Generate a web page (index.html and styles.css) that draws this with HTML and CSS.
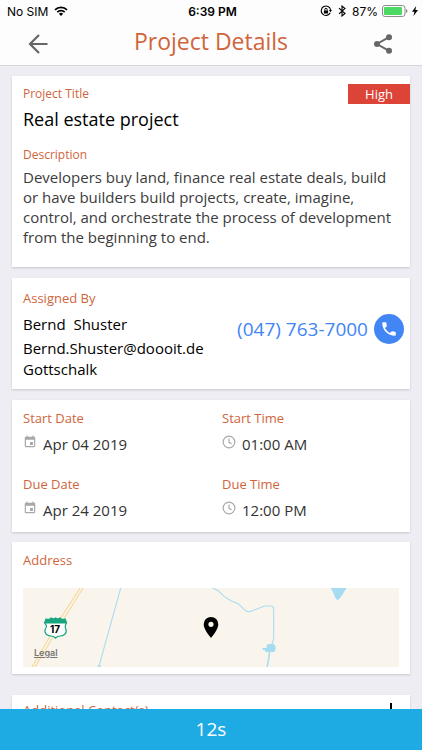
FILE: index.html
```html
<!DOCTYPE html>
<html lang="en">
<head>
<meta charset="utf-8">
<meta name="viewport" content="width=device-width, initial-scale=1">
<title>Project Details</title>
<link rel="stylesheet" href="styles.css">
</head>
<body>
<svg class="defs" aria-hidden="true">
  <symbol id="calendar" viewBox="0 0 24 24"><path d="M17 12h-5v5h5v-5zM16 1v2H8V1H6v2H5c-1.110 0-1.990.9-1.990 2L3 19a2 2 0 0 0 2 2h14c1.100 0 2-.9 2-2V5c0-1.100-.9-2-2-2h-1V1h-2zm3 18H5V8h14v11z"/></symbol>
  <symbol id="clock" viewBox="0 0 24 24"><circle cx="12" cy="12" r="10" fill="none" stroke="currentColor" stroke-width="2"/><path d="M12 6v6.500l4.500 2.500" fill="none" stroke="currentColor" stroke-width="2"/></symbol>
</svg>

<div class="status">
  <div class="status-left">
    <span>No SIM</span>
    <svg class="wifi" viewBox="0 0 14 10"><path d="M7 10 4.900 7.800a3 3 0 0 1 4.200 0z"/><path d="M3.300 6.200a5.200 5.200 0 0 1 7.400 0M1 3.800a8.500 8.500 0 0 1 12 0" fill="none" stroke="currentColor" stroke-width="1.800"/></svg>
  </div>
  <span class="status-time">6:39 PM</span>
  <div class="status-right">
    <svg class="lock" viewBox="0 0 12 12"><path d="M10.200 7.800A4.700 4.700 0 1 1 10.600 5" fill="none" stroke="currentColor" stroke-width="1.100"/><path d="M9 5h3l-1.500 2.200zM3.900 5.500h4.200v3H3.900z"/><path d="M4.800 5.600V4.500a1.200 1.200 0 0 1 2.400 0v1.100" fill="none" stroke="currentColor"/></svg>
    <svg class="bluetooth" viewBox="0 0 8 12"><path d="m1 3.200 6 5.300L4 11V1l3 2.500-6 5.300" fill="none" stroke="currentColor" stroke-width="1.100"/></svg>
    <span>87%</span>
    <svg class="battery" viewBox="0 0 26 12"><rect x=".5" y=".5" width="22.500" height="11" rx="2.500" fill="none" stroke="#8d8d8d"/><rect x="2" y="2" width="18" height="8" rx="1" fill="#4cd964"/><path d="M24 4q1.500.5 1.500 2T24 8z" fill="#8d8d8d"/></svg>
    <svg class="bolt" viewBox="0 0 6 10"><path d="M4.200 0 0 5.700h2.400L1.500 10 6 4H3.400z"/></svg>
  </div>
</div>

<header class="topbar">
  <button class="icon-button" type="button" aria-label="Back">
    <svg class="back" viewBox="0 0 20 20"><path d="M19.500 10H2M11 1 2 10l9 9" fill="none" stroke="currentColor" stroke-width="2.200"/></svg>
  </button>
  <h1>Project Details</h1>
  <button class="icon-button" type="button" aria-label="Share">
    <svg class="share" viewBox="0 0 18 20"><path d="M15 3.200 3 10l12 6.800" fill="none" stroke="currentColor" stroke-width="1.900"/><circle cx="15" cy="3.200" r="3"/><circle cx="3" cy="10" r="3"/><circle cx="15" cy="16.800" r="3"/></svg>
  </button>
</header>

<main>
  <section class="card summary">
    <span class="priority">High</span>
    <h2 class="small-label">Project Title</h2>
    <p class="project-name">Real estate project</p>
    <h2 class="small-label">Description</h2>
    <p class="description">Developers buy land, finance real estate deals, build or have builders build projects, create, imagine, control, and orchestrate the process of development from the beginning to end.</p>
  </section>

  <section class="card assigned">
    <div class="person">
      <h2 class="label">Assigned By</h2>
      <p class="person-name">Bernd&nbsp; Shuster</p>
      <p>Bernd.Shuster@doooit.de</p>
      <p>Gottschalk</p>
    </div>
    <a class="phone" href="tel:0477637000">
      <span>(047) 763-7000</span>
      <span class="call"><svg viewBox="0 0 24 24"><path d="M6.620 10.790c1.440 2.830 3.760 5.140 6.590 6.590l2.200-2.200c.27-.27.67-.36 1.020-.24 1.120.37 2.330.57 3.570.57.55 0 1 .45 1 1V20c0 .55-.45 1-1 1-9.390 0-17-7.610-17-17 0-.55.45-1 1-1h3.500c.55 0 1 .45 1 1 0 1.250.2 2.450.57 3.570.11.35.03.74-.25 1.020l-2.200 2.200z"/></svg></span>
    </a>
  </section>

  <section class="card schedule">
    <div class="slot"><h2 class="label">Start Date</h2><p class="value"><svg class="value-icon"><use href="#calendar"/></svg>Apr 04 2019</p></div>
    <div class="slot"><h2 class="label">Start Time</h2><p class="value"><svg class="value-icon"><use href="#clock"/></svg>01:00 AM</p></div>
    <div class="slot"><h2 class="label">Due Date</h2><p class="value"><svg class="value-icon"><use href="#calendar"/></svg>Apr 24 2019</p></div>
    <div class="slot"><h2 class="label">Due Time</h2><p class="value"><svg class="value-icon"><use href="#clock"/></svg>12:00 PM</p></div>
  </section>

  <section class="card address">
    <h2 class="label">Address</h2>
    <div class="map">
      <svg class="map-art" viewBox="0 0 375 79" preserveAspectRatio="xMidYMid slice">
        <g fill="none" stroke="#f7d797" stroke-width="1"><path d="M57 0 37 31 9 79M60 0 40 32 12 79"/></g>
        <g fill="none" stroke="#a9dcf0" stroke-width="1.100"><path d="M97.500 0 75.500 79M74.500 79l1.500-2 2 1.500"/><path d="M189 0l6 3 6 6 7 4 7 3 6 6q3 3 7 1l13-5h6q3 0 3 3v30l-2 6"/><path d="m246 62-1 9-1.500 8" stroke-width="1.600"/></g>
        <path d="M243 58q0-2 3-2h4q2 1 2 4 0 4-3 4h-6q-2 0-2-2h-2v-2h4zM307 0h16q-2 2-4 6-3 5-5 6-2 0-4-6-2-4-3-6z" fill="#a5dcf2"/>
        <path d="M23 31q4 1 5-1 2 2 4.500 0 2.500 2 4.500 0 1 2 5 1l1.500 4q-2.500 3-.5 7c1 4-3 6-6 6-2 0-3.500 1-4.500 2-1-1-2.500-2-4.500-2-3 0-7-2-6-6 2-4 2-4-.5-7z" fill="#fff" stroke="#17a57f" stroke-width="1.200"/>
        <path d="M23 31q4 1 5-1 2 2 4.500 0 2.500 2 4.500 0 1 2 5 1l1.500 4.500h-22z" fill="#17a57f"/>
        <text class="route" x="32" y="45" text-anchor="middle">17</text>
        <path d="M187.500 29a7.300 7.300 0 0 0-7.300 7.300c0 5.500 7.300 13.700 7.300 13.700s7.300-8.200 7.300-13.700a7.300 7.300 0 0 0-7.300-7.300zm0 9.900a2.600 2.600 0 1 1 0-5.200 2.600 2.600 0 0 1 0 5.200z"/>
      </svg>
      <a class="legal" href="#legal">Legal</a>
    </div>
  </section>

  <section class="card contacts">
    <h2 class="label">Additional Contact(s)</h2>
    <button class="add" type="button" aria-label="Add contact"><svg viewBox="0 0 16 16"><path d="M8 1v14M1 8h14" fill="none" stroke="currentColor" stroke-width="2"/></svg></button>
  </section>
</main>

<footer class="timer">12s</footer>
</body>
</html>
```
FILE: styles.css
```css
* { box-sizing: border-box; }

body {
  margin: 0;
  height: 100vh;
  display: flex;
  flex-direction: column;
  overflow: hidden;
  background: #eeedf4;
  color: #000;
  font-family: "Open Sans", "Noto Sans", sans-serif;
  font-size: 15px;
}

h1, h2, p { margin: 0; font-weight: 400; }
svg { display: block; fill: currentColor; }
button { border: 0; padding: 0; background: none; color: inherit; }
.defs { position: absolute; width: 0; height: 0; }

.status {
  flex: none;
  display: grid;
  grid-template-columns: 1fr auto 1fr;
  align-items: center;
  height: 22px;
  padding: 0 4px 0 7px;
  background: #fdfdfd;
  font-family: Inter, "Liberation Sans", sans-serif;
  font-size: 12px;
}
.status-left, .status-right { display: flex; align-items: center; gap: 6px; }
.status-right { justify-content: flex-end; gap: 4px; }
.status-time { font-weight: 600; }
.wifi { width: 14px; height: 10px; }
.lock { width: 12px; height: 12px; }
.bluetooth { width: 8px; height: 12px; margin: 0 2px; }
.battery { width: 26px; height: 12px; }
.bolt { width: 6px; height: 10px; }

.topbar {
  flex: none;
  display: flex;
  align-items: center;
  justify-content: space-between;
  height: 44px;
  padding: 0 30px 0 28px;
  background: #fdfdfd;
  border-bottom: 1px solid #d6d6da;
}
.topbar h1 { padding-bottom: 5px; font-size: 23px; line-height: 32px; color: #d0653c; }
.icon-button { color: #666; }
.back { width: 20px; height: 20px; }
.share { width: 18px; height: 20px; }

main { flex: 1; min-height: 0; overflow: hidden; padding: 10px 12px; }
.card {
  margin-bottom: 11px;
  padding: 10px 11px;
  background: #fff;
  box-shadow: 0 1px 2px rgba(0, 0, 0, 0.16);
}
.label { font-size: 13px; line-height: 20px; color: #d0653c; }
.small-label { font-size: 12px; line-height: 16px; color: #d0653c; }

.summary { position: relative; padding-bottom: 20px; }
.priority {
  position: absolute;
  top: 8px;
  right: 0;
  width: 62px;
  background: #db4437;
  color: #fff;
  font-size: 13px;
  line-height: 20px;
  text-align: center;
}
.project-name { margin: 5px 0 16px; font-size: 18px; line-height: 24px; }
.description { margin-top: 4px; font-size: 15px; line-height: 20px; color: #3c3c3c; }

.assigned { display: flex; justify-content: space-between; padding-right: 6px; padding-bottom: 9px; }
.person { line-height: 21px; }
.person-name { margin: 6px 0 3px; }
.phone {
  display: flex;
  align-items: center;
  align-self: center;
  gap: 6px;
  margin-top: -10px;
  color: #4285f4;
  font-size: 19px;
  text-decoration: none;
}
.call {
  display: grid;
  place-items: center;
  width: 30px;
  height: 30px;
  border-radius: 50%;
  background: #4285f4;
  color: #fff;
}
.call svg { width: 18px; height: 18px; }

.schedule { display: grid; grid-template-columns: 1fr 1fr; row-gap: 20px; padding: 8px 0 12px; margin-bottom: 10px; }
.slot { padding-left: 11px; }
.value { display: flex; gap: 6px; margin-top: 6px; line-height: 20px; color: #333; }
.value-icon { width: 14px; height: 14px; margin-top: 1px; color: #a8a8a8; }

.address { padding-top: 8px; padding-bottom: 7px; margin-bottom: 21px; }
.map { position: relative; height: 79px; margin-top: 18px; background: #f9f5ed; }
.map-art { width: 100%; height: 100%; }
.route { font: 700 10px Inter, sans-serif; }
.legal {
  position: absolute;
  left: 11px;
  bottom: 8px;
  color: #777;
  font: 600 9px/12px Inter, sans-serif;
}

.contacts { display: flex; justify-content: space-between; padding-top: 5px; }
.add svg { width: 16px; height: 16px; }

.timer {
  flex: none;
  background: #1eaae3;
  color: #fff;
  font-size: 19px;
  line-height: 41px;
  text-align: center;
}
```
